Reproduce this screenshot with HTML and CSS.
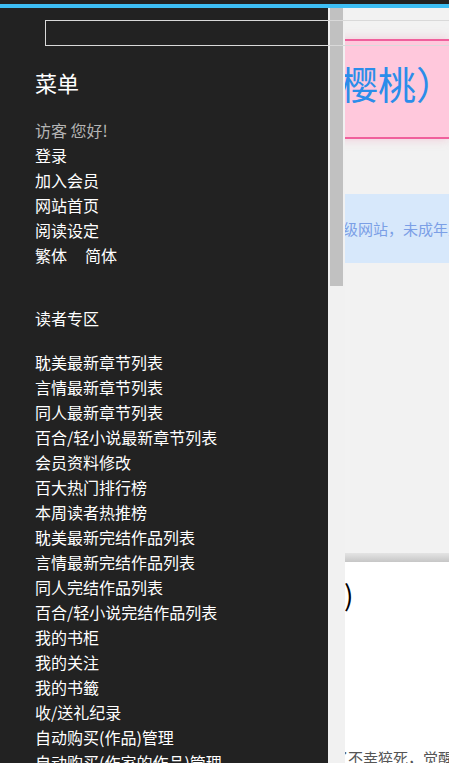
FILE: index.html
```html
<!DOCTYPE html>
<html lang="zh-CN">
<head>
<meta charset="utf-8">
<title>菜单</title>
<link rel="stylesheet" href="styles.css">
</head>
<body>
<div class="topbar"></div>
<main class="page">
  <section class="hero">
    <div class="banner"><span class="banner-title">（樱桃）</span></div>
    <div class="notice"><span class="notice-text">十八禁级网站，未成年人请勿进入</span></div>
  </section>
  <div class="hero-shadow"></div>
  <h1 class="book-title">樱桃)</h1>
  <p class="intro">他遭遇了不幸猝死，觉醒后发现自己穿越了</p>
</main>

<aside class="drawer">
  <nav class="menu">
    <h2 class="menu-title">菜单</h2>
    <ul class="menu-list">
      <li class="greet">访客 您好!</li>
      <li><a href="#">登录</a></li>
      <li><a href="#">加入会员</a></li>
      <li><a href="#">网站首页</a></li>
      <li><a href="#">阅读设定</a></li>
      <li><a href="#">繁体</a><a href="#" class="gap">简体</a></li>
    </ul>
    <h3 class="section-title">读者专区</h3>
    <ul class="menu-list">
      <li><a href="#">耽美最新章节列表</a></li>
      <li><a href="#">言情最新章节列表</a></li>
      <li><a href="#">同人最新章节列表</a></li>
      <li><a href="#">百合/轻小说最新章节列表</a></li>
      <li><a href="#">会员资料修改</a></li>
      <li><a href="#">百大热门排行榜</a></li>
      <li><a href="#">本周读者热推榜</a></li>
      <li><a href="#">耽美最新完结作品列表</a></li>
      <li><a href="#">言情最新完结作品列表</a></li>
      <li><a href="#">同人完结作品列表</a></li>
      <li><a href="#">百合/轻小说完结作品列表</a></li>
      <li><a href="#">我的书柜</a></li>
      <li><a href="#">我的关注</a></li>
      <li><a href="#">我的书籤</a></li>
      <li><a href="#">收/送礼纪录</a></li>
      <li><a href="#">自动购买(作品)管理</a></li>
      <li><a href="#">自动购买(作家的作品)管理</a></li>
    </ul>
  </nav>
  <div class="scrolltrack"><div class="scrollthumb"></div></div>
</aside>

<input class="search" type="text" aria-label="搜索">
</body>
</html>
```

FILE: styles.css
```css
html, body {
  margin: 0;
  padding: 0;
  overflow: hidden;
  height: 100%;
}
body {
  background: #fff;
  font-family: "Noto Sans CJK SC", "Noto Sans", sans-serif;
  position: relative;
}
.topbar {
  height: 4px;
  background: #222;
  border-bottom: 4px solid #3dbef4;
}
.page {
  width: 449px;
}
.hero {
  background: #f2f2f2;
  height: 545px;
  padding-top: 31px;
  box-sizing: border-box;
}
.banner {
  background: #ffc8dc;
  border-top: 2px solid #f0609c;
  border-bottom: 2px solid #f0609c;
  height: 96px;
  box-shadow: 0 0 10px rgba(240, 120, 160, 0.35);
  white-space: nowrap;
  overflow: hidden;
}
.banner-title {
  display: block;
  padding-left: 302px;
  font-size: 38px;
  line-height: 84px;
  color: #2b8dea;
}
.notice {
  margin-top: 55px;
  background: #d7e8fb;
  height: 69px;
  white-space: nowrap;
  overflow: hidden;
}
.notice-text {
  display: block;
  padding-left: 298px;
  font-size: 15px;
  line-height: 69px;
  color: #7b9fe6;
}
.hero-shadow {
  height: 9px;
  background: linear-gradient(#e4e4e4, #c6c6c6);
}
.book-title {
  margin: 14px 0 0;
  padding-left: 288px;
  font-size: 28px;
  line-height: 36px;
  font-weight: normal;
  color: #000;
  white-space: nowrap;
}
.intro {
  margin: 134px 0 0;
  padding-left: 288px;
  font-size: 15px;
  line-height: 24px;
  color: #555;
  white-space: nowrap;
}

.drawer {
  position: fixed;
  top: 8px;
  left: 0;
  bottom: 0;
  display: flex;
}
.menu {
  width: 328px;
  background: #222;
  padding: 59px 0 0 35px;
  box-sizing: border-box;
  overflow: hidden;
}
.menu-title {
  margin: 0 0 21px;
  font-size: 22px;
  line-height: 30px;
  font-weight: normal;
  color: #fff;
}
.menu-list {
  list-style: none;
  margin: 0;
  padding: 0;
}
.menu-list li {
  font-size: 16px;
  line-height: 25px;
  white-space: nowrap;
}
.menu-list a {
  color: #fff;
  text-decoration: none;
}
.menu-list .greet {
  color: #b4b4b4;
}
.menu-list .gap {
  margin-left: 18px;
}
.section-title {
  margin: 38px 0 19px;
  font-size: 16px;
  line-height: 25px;
  font-weight: normal;
  color: #fff;
}
.scrolltrack {
  width: 17px;
  background: #f1f1f1;
  padding: 0 2px;
  box-sizing: border-box;
}
.scrollthumb {
  height: 278px;
  background: #c1c1c1;
}
.search {
  position: absolute;
  top: 20px;
  left: 45px;
  width: 520px;
  height: 26px;
  box-sizing: border-box;
  margin: 0;
  padding: 0;
  border: 1px solid #d9d9d9;
  background: transparent;
  outline: none;
}
```
